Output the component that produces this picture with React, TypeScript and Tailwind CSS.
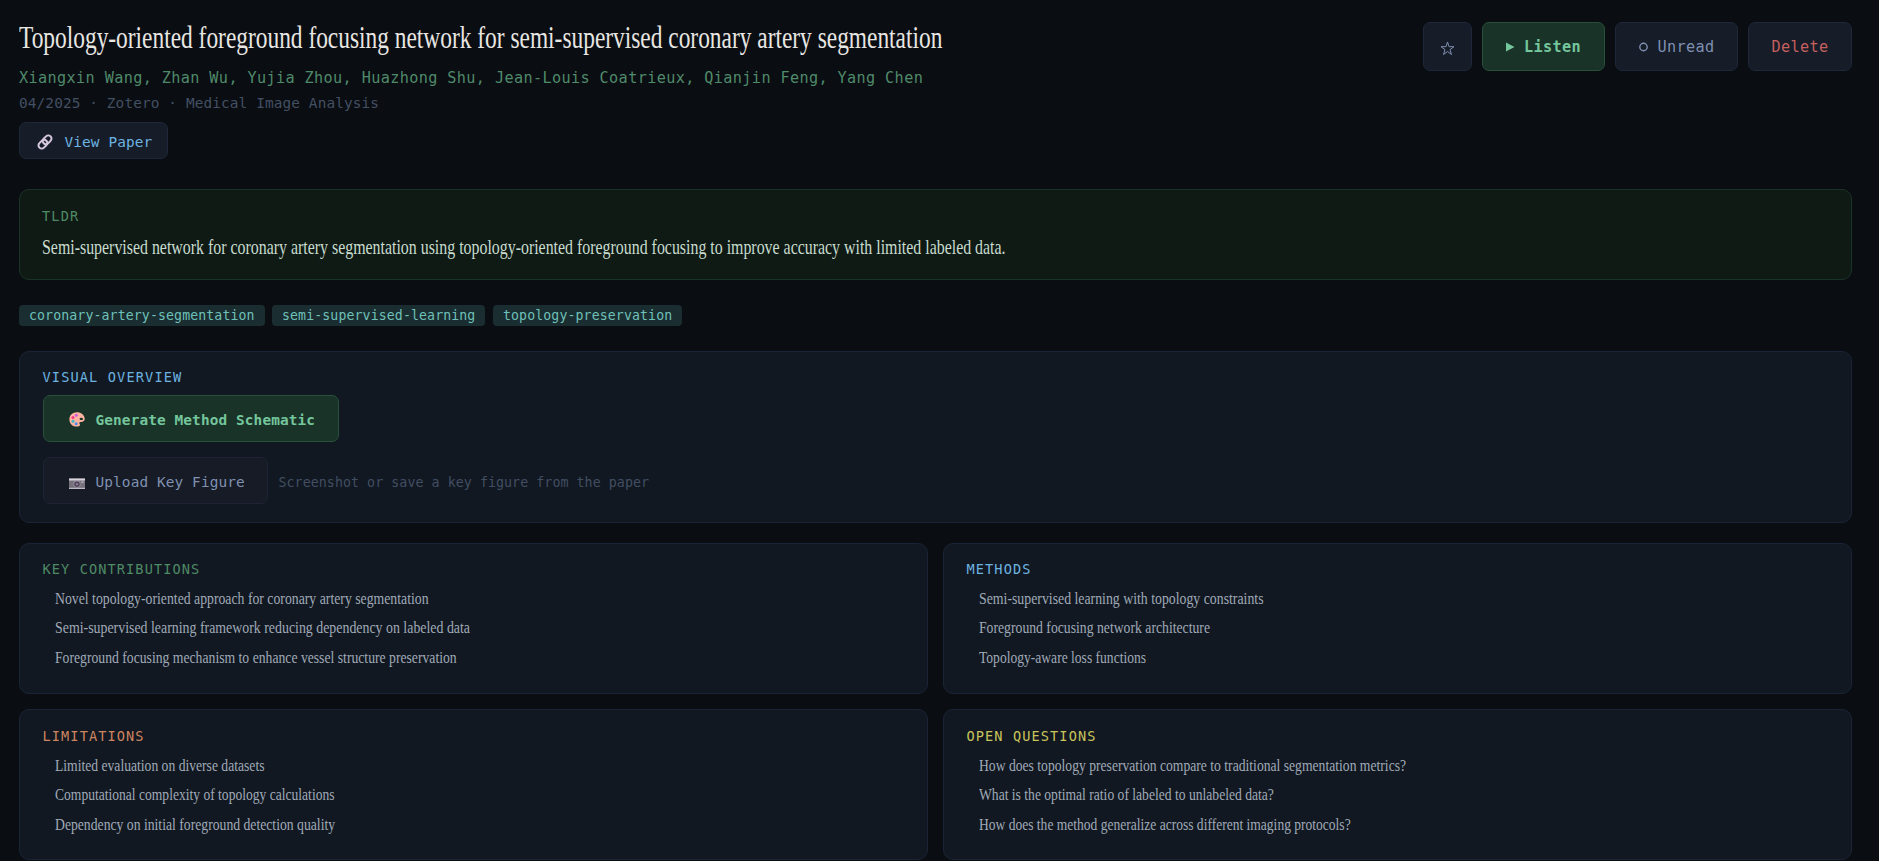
import React from "react";

const MONO = "font-['DejaVu_Sans_Mono',monospace] whitespace-pre";
const SERIF = "font-['Liberation_Serif',serif] whitespace-pre block w-max origin-left";

function LinkIcon() {
  return (
    <svg width="16" height="16" viewBox="0 0 16 16" fill="none" stroke="#d5c8dc" strokeWidth="2" className="shrink-0">
      <rect x="5.200" y="2.600" width="9.800" height="6.400" rx="3.200" transform="rotate(-45 10.100 5.800)" />
      <rect x="1" y="7" width="9.800" height="6.400" rx="3.200" transform="rotate(-45 5.900 10.200)" />
    </svg>
  );
}

function PaletteIcon() {
  return (
    <svg width="16" height="15" viewBox="0 0 16 15" className="shrink-0">
      <path d="M7.8.3C3.6.3.4 3.300.4 7.400c0 4 3 7.100 6.900 7.200 1.800.1 3.600-.4 3.700-1.600.1-1-.9-1.400-.7-2.300.2-.9 1.500-.6 3-.9 1.500-.3 2.500-1.400 2.400-3.200C15.400 3 12.100.3 7.800.3z" fill="#ffb3a0" />
      <ellipse cx="12.300" cy="6.900" rx="1.700" ry="1.200" fill="#1c3329" />
      <circle cx="7.300" cy="3.300" r="1.500" fill="#c65fe0" />
      <circle cx="4" cy="5.600" r="1.500" fill="#f0388c" />
      <circle cx="4" cy="9.300" r="1.500" fill="#3cb8c4" />
      <circle cx="7.200" cy="11.800" r="1.500" fill="#4a8cf0" />
    </svg>
  );
}

function CameraIcon() {
  return (
    <svg width="16" height="11" viewBox="0 0 16 11" className="shrink-0">
      <rect x="0" y="0.500" width="16" height="10.500" rx="0.800" fill="#75707c" />
      <rect x="0" y="0.500" width="16" height="2" fill="#d8d4dc" />
      <rect x="0" y="9.800" width="16" height="1.200" fill="#bdb8c4" />
      <circle cx="8" cy="6.200" r="3.300" fill="#4a3d52" stroke="#a8a0b0" strokeWidth="0.800" />
      <circle cx="8" cy="6.200" r="1.300" fill="#8a7c96" />
      <rect x="12.500" y="3.500" width="2" height="1.200" fill="#d8d4dc" />
    </svg>
  );
}

const CARDS = [
  {
    title: "KEY CONTRIBUTIONS",
    color: "text-[#4f8a66]",
    pad: "pt-[17px]",
    items: [
      ["Novel topology-oriented approach for coronary artery segmentation", "scale-x-[0.786]"],
      ["Semi-supervised learning framework reducing dependency on labeled data", "scale-x-[0.793]"],
      ["Foreground focusing mechanism to enhance vessel structure preservation", "scale-x-[0.782]"],
    ],
  },
  {
    title: "METHODS",
    color: "text-[#6db3e0]",
    pad: "pt-[17px]",
    items: [
      ["Semi-supervised learning with topology constraints", "scale-x-[0.789]"],
      ["Foreground focusing network architecture", "scale-x-[0.783]"],
      ["Topology-aware loss functions", "scale-x-[0.775]"],
    ],
  },
  {
    title: "LIMITATIONS",
    color: "text-[#cc8560]",
    pad: "pt-[18px]",
    items: [
      ["Limited evaluation on diverse datasets", "scale-x-[0.778]"],
      ["Computational complexity of topology calculations", "scale-x-[0.775]"],
      ["Dependency on initial foreground detection quality", "scale-x-[0.782]"],
    ],
  },
  {
    title: "OPEN QUESTIONS",
    color: "text-[#c9c45c]",
    pad: "pt-[18px]",
    items: [
      ["How does topology preservation compare to traditional segmentation metrics?", "scale-x-[0.779]"],
      ["What is the optimal ratio of labeled to unlabeled data?", "scale-x-[0.777]"],
      ["How does the method generalize across different imaging protocols?", "scale-x-[0.773]"],
    ],
  },
];

const TAGS = [
  ["coronary-artery-segmentation", "w-[246px]"],
  ["semi-supervised-learning", "w-[213px] mr-[1px]"],
  ["topology-preservation", "w-[189px]"],
];

export default function App() {
  return (
    <div className="h-[861px] w-full overflow-hidden bg-[#0a0d11] pl-[19px] pr-[27px] pt-[22px]">
      <header className="flex h-[137px] items-start justify-between">
        <div>
          <h1 className={`${SERIF} -mt-[1px] h-[32px] scale-x-[0.731] text-[32px] leading-[32px] text-[#e8e6e3]`}>
            Topology-oriented foreground focusing network for semi-supervised coronary artery segmentation
          </h1>
          <p className={`${MONO} mt-[13px] text-[15.200px] leading-[24px] tracking-[0.374px] text-[#4f8a6b]`}>
            Xiangxin Wang, Zhan Wu, Yujia Zhou, Huazhong Shu, Jean-Louis Coatrieux, Qianjin Feng, Yang Chen
          </p>
          <p className={`${MONO} mt-[2px] text-[14.400px] leading-[22px] tracking-[0.120px] text-[#435064]`}>
            04/2025 · Zotero · Medical Image Analysis
          </p>
          <button className="mt-[8px] flex h-[37px] w-[149px] items-center gap-[11.500px] rounded-[7px] border border-[#1e2838] bg-[#161c28] pl-[17px] pt-[3px]">
            <LinkIcon />
            <span className={`${MONO} pt-[1px] text-[14.400px] tracking-[0.120px] text-[#6db3e0]`}>View Paper</span>
          </button>
        </div>
        <div className="flex gap-[10px]">
          <button className="flex size-[49px] items-center justify-center rounded-[7px] border border-[#1e2838] bg-[#161c28] pt-[3px]">
            <svg width="15" height="15" viewBox="0 0 15 15" fill="none" stroke="#7f90b0" strokeWidth="1">
              <path d="M7.500 1 9.050 5.700H14L10 8.650 11.500 13.500 7.500 10.550 3.500 13.500 5 8.650 1 5.700H5.950z" />
            </svg>
          </button>
          <button className="flex h-[49px] w-[123px] items-center gap-[9px] rounded-[7px] border border-[#28503a] bg-[#1a3328] pl-[23px]">
            <svg width="9" height="10" viewBox="0 0 9 10" className="shrink-0">
              <path d="M0 0.500 8.500 5 0 9.500z" fill="#74c69d" />
            </svg>
            <span className={`${MONO} pt-[1px] text-[15.200px] font-bold tracking-[0.374px] text-[#74c69d]`}>Listen</span>
          </button>
          <button className="flex h-[49px] w-[123px] items-center gap-[9.500px] rounded-[7px] border border-[#1e2838] bg-[#161c28] pl-[23px]">
            <svg width="9" height="10" viewBox="0 0 9 10" className="shrink-0">
              <circle cx="4.500" cy="5" r="3.700" fill="none" stroke="#7f90b0" strokeWidth="1.400" />
            </svg>
            <span className={`${MONO} pt-[1px] text-[15.200px] tracking-[0.374px] text-[#7f90b0]`}>Unread</span>
          </button>
          <button className="flex h-[49px] w-[104px] items-center justify-center rounded-[7px] border border-[#1e2838] bg-[#161c28]">
            <span className={`${MONO} pt-[1px] text-[15.200px] tracking-[0.374px] text-[#c4605e]`}>Delete</span>
          </button>
        </div>
      </header>

      <section className="mt-[30px] h-[91px] rounded-[10px] border border-[#1a3328] bg-[#0f1a14] pl-[22px] pt-[16px]">
        <h2 className={`${MONO} text-[13.600px] leading-[20px] tracking-[1.140px] text-[#4f8a66]`}>TLDR</h2>
        <p className={`${SERIF} mt-[7px] scale-x-[0.7225] text-[22px] leading-[28px] text-[#c8dccf]`}>
          Semi-supervised network for coronary artery segmentation using topology-oriented foreground focusing to improve accuracy with limited labeled data.
        </p>
      </section>

      <div className="mt-[25px] flex h-[21px] gap-[7px]">
        {TAGS.map(([t, w]) => (
          <span key={t} className={`${MONO} ${w} rounded-[4px] bg-[#1a2d30] pl-[10px] text-[13.200px] leading-[21px] tracking-[0.120px] text-[#6fc0b8]`}>
            {t}
          </span>
        ))}
      </div>

      <section className="mt-[25px] h-[172px] rounded-[10px] border border-[#1a2436] bg-[#111821] pl-[23px] pt-[15px]">
        <h2 className={`${MONO} -ml-[0.500px] text-[13.600px] leading-[20px] tracking-[1.140px] text-[#6db3e0]`}>VISUAL OVERVIEW</h2>
        <button className="mt-[8px] flex h-[47px] w-[296px] items-center gap-[11px] rounded-[7px] border border-[#28503a] bg-[#1a3328] pl-[24.500px] pt-[2px]">
          <PaletteIcon />
          <span className={`${MONO} pt-[2px] text-[14.400px] font-bold tracking-[0.120px] text-[#74c69d]`}>Generate Method Schematic</span>
        </button>
        <div className="mt-[15px] flex items-center gap-[10.500px]">
          <button className="flex h-[47px] w-[225px] items-center gap-[11px] rounded-[7px] border border-[#1e2434] bg-[#161b26] pl-[24.500px] pt-[3px]">
            <span className="pt-[3px]">
              <CameraIcon />
            </span>
            <span className={`${MONO} pt-[1px] text-[14.400px] tracking-[0.120px] text-[#7f90b0]`}>Upload Key Figure</span>
          </button>
          <span className={`${MONO} pt-[4px] text-[13.300px] tracking-[0.050px] text-[#414e62]`}>Screenshot or save a key figure from the paper</span>
        </div>
      </section>

      <div className="mt-[20px] grid grid-cols-2 gap-[15px]">
        {CARDS.map((c) => (
          <section key={c.title} className={`h-[151px] rounded-[10px] border border-[#1a2436] bg-[#111821] pl-[22.500px] ${c.pad}`}>
            <h2 className={`${MONO} -mt-[2px] text-[13.600px] leading-[20px] tracking-[1.100px] ${c.color}`}>{c.title}</h2>
            <ul className="mt-[5px] pl-[12.500px]">
              {c.items.map(([text, fit]) => (
                <li key={text} className={`${SERIF} ${fit} text-[17.500px] leading-[29.300px] text-[#a0aab8]`}>
                  {text}
                </li>
              ))}
            </ul>
          </section>
        ))}
      </div>
    </div>
  );
}
